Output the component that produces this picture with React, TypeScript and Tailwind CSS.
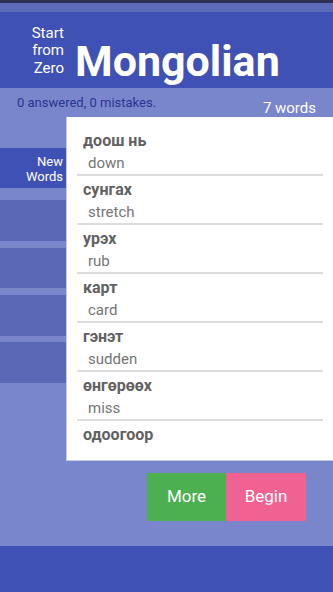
import React from "react";

const words = [
  { mn: "доош нь", en: "down" },
  { mn: "сунгах", en: "stretch" },
  { mn: "урэх", en: "rub" },
  { mn: "карт", en: "card" },
  { mn: "гэнэт", en: "sudden" },
  { mn: "өнгөрөөх", en: "miss" },
  { mn: "одоогоор", en: "" },
];

export default function App() {
  return (
    <div
      className="w-[333px] h-[592px] flex flex-col bg-[#7986cb] overflow-hidden"
      style={{ fontFamily: "Roboto, 'Noto Sans', sans-serif" }}
    >
      <div className="h-[3px] bg-[#2b3052]" />
      <div className="h-[9px] bg-[#5c6bb8]" />
      <div className="h-[76px] bg-[#3f51b5] flex items-start text-white">
        <div className="w-[64px] mt-[12.5px] text-right text-[15px] leading-[17.7px]">
          <div>Start</div>
          <div>from</div>
          <div>Zero</div>
        </div>
        <div className="ml-[11px] mt-[28px] text-[43px] leading-[43px] font-bold">
          Mongolian
        </div>
      </div>
      <div className="h-[29px] flex justify-between">
        <div className="pl-[17px] pt-[8px] text-[13px] leading-[14px] text-[#283593]">
          0 answered, 0 mistakes.
        </div>
        <div className="pr-[17px] pt-[11px] text-[15px] leading-[18px] text-white">
          7 words
        </div>
      </div>
      <div className="flex">
        <div className="w-[66px] pt-[31px] flex flex-col">
          <div className="h-[40px] bg-[#3f51b5] text-white text-right text-[13px] leading-[14.5px] pt-[7px] pr-[3px]">
            <div>New</div>
            <div>Words</div>
          </div>
          <div className="h-[41px] mt-[12px] bg-[#5a69b6]" />
          <div className="h-[40px] mt-[7px] bg-[#5a69b6]" />
          <div className="h-[41px] mt-[7px] bg-[#5a69b6]" />
          <div className="h-[41px] mt-[6px] bg-[#5a69b6]" />
        </div>
        <div className="flex-1 h-[344px] bg-white border-l border-b border-[#c5cae9] pl-[10px] pr-[10px] pt-[10px]">
          {words.map((w, i) => (
            <div
              key={i}
              className={
                i < words.length - 1
                  ? "h-[49px] border-b-2 border-[#dcdcdc] pt-[3px]"
                  : "h-[49px] pt-[3px]"
              }
            >
              <div className="pl-[6px] text-[16px] leading-[22px] font-bold text-[#616161]">
                {w.mn}
              </div>
              <div className="pl-[11px] text-[15px] leading-[22px] text-[#757575]">
                {w.en}
              </div>
            </div>
          ))}
        </div>
      </div>
      <div className="flex pl-[147px] mt-[12px]">
        <div className="w-[79px] h-[48px] bg-[#4caf50] text-white text-[17px] flex items-center justify-center">
          More
        </div>
        <div className="w-[80px] h-[48px] bg-[#f06292] text-white text-[17px] flex items-center justify-center">
          Begin
        </div>
      </div>
      <div className="flex-1" />
      <div className="h-[46px] bg-[#3f51b5]" />
    </div>
  );
}
